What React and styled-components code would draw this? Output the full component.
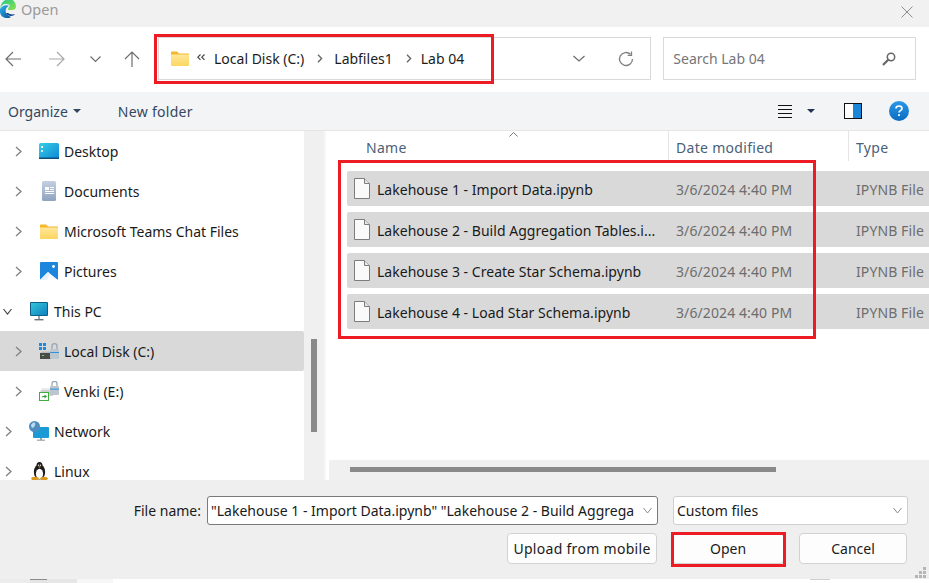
import React from 'react';
import styled, { createGlobalStyle } from 'styled-components';

const GlobalStyle = createGlobalStyle`
  html, body { margin: 0; padding: 0; background: #fff; }
  * { box-sizing: border-box; }
`

const Dialog = styled('div')`
  position: relative;
  width: 929px;
  height: 583px;
  overflow: hidden;
  display: flex;
  flex-direction: column;
  background: #fff;
  font-family: "Noto Sans", "Open Sans", sans-serif;
  font-size: 14px;
  color: #1a1a1a;
`

const TitleBar = styled('div')`
  height: 27px;
  flex: none;
  background: #f1f1f1;
  display: flex;
  align-items: flex-start;
`
const TitleText = styled('div')`
  margin-left: 5px;
  color: #9a9a9a;
  font-size: 14.5px;
  line-height: 18px;
`
const CloseButton = styled('div')`
  margin-left: auto;
  margin-right: 16px;
  margin-top: 3px;
  height: 12px;
`

const NavBar = styled('div')`
  height: 65px;
  flex: none;
  display: flex;
  align-items: center;
  padding: 0 13px 2px 5px;
`
const NavIcon = styled('div')`
  margin-left: ${props => props.$gap}px;
  display: flex;
  height: 16px;
`
const AddressBox = styled('div')`
  margin-left: 18px;
  width: 494px;
  height: 43px;
  border: 1px solid #d9d9d9;
  display: flex;
  align-items: center;
  padding-left: 12px;
`
const Crumb = styled('span')`
  margin-left: ${props => props.$gap}px;
  color: #1c1c1c;
  white-space: nowrap;
  display: flex;
`
const CrumbMark = styled('span')`
  margin-left: ${props => props.$gap}px;
  margin-bottom: ${props => props.$lift || 0}px;
  display: flex;
`
const AddressTools = styled('div')`
  margin-left: auto;
  display: flex;
  align-items: center;
  gap: 33px;
  padding-right: 16px;
`
const SearchBox = styled('div')`
  margin-left: 12px;
  width: 253px;
  height: 43px;
  border: 1px solid #d9d9d9;
  display: flex;
  align-items: center;
  justify-content: space-between;
  padding: 0 19px 0 9px;
  color: #767676;
`

const Toolbar = styled('div')`
  height: 39px;
  flex: none;
  background: #f3f4f6;
  border-bottom: 1px solid #e5e5e5;
  display: flex;
  align-items: center;
  padding-left: 8px;
`
const ToolButton = styled('div')`
  display: flex;
  align-items: center;
  gap: 5px;
  margin-left: ${props => props.$gap || 0}px;
  letter-spacing: ${props => props.$spacing || 0}px;
  color: #33475f;
`
const ToolIcons = styled('div')`
  margin-left: auto;
  display: flex;
  align-items: center;
  padding-right: 20px;
`
const ToolIcon = styled('div')`
  margin-left: ${props => props.$gap}px;
  display: flex;
`

const Main = styled('div')`
  height: 349px;
  flex: none;
  display: flex;
`
const Sidebar = styled('div')`
  width: 304px;
  flex: none;
  overflow: hidden;
  display: flex;
  flex-direction: column;
`
const TreeRow = styled('div')`
  height: 40px;
  flex: none;
  display: flex;
  align-items: center;
  padding-left: ${props => props.$level ? 15 : props.$open ? 3 : 5}px;
  background: ${props => props.$selected ? '#d9d9d9' : 'transparent'};
  border-radius: 0 2px 2px 0;
`
const TreeIcon = styled('div')`
  width: 20px;
  height: 20px;
  margin-left: 17px;
  margin-right: 5px;
  display: flex;
  align-items: center;
  justify-content: center;
`
const TreeLabel = styled('span')`
  white-space: nowrap;
  color: #1a1a1a;
`
const Splitter = styled('div')`
  width: 22px;
  flex: none;
  background: #f0f0f0;
  border-right: 2px solid #f7f7f7;
  padding: 208px 0 0 7px;
`
const SplitterThumb = styled('div')`
  width: 6px;
  height: 93px;
  background: #8a8a8a;
`

const Content = styled('div')`
  flex: 1;
  min-width: 0;
  display: flex;
  flex-direction: column;
`
const HeaderRow = styled('div')`
  height: 30px;
  flex: none;
  display: grid;
  grid-template-columns: 343px 180px 1fr;
  position: relative;
`
const HeaderCell = styled('div')`
  padding-left: ${props => props.$pad}px;
  padding-top: 7px;
  color: #4a5f78;
  letter-spacing: .3px;
  border-right: ${props => props.$last ? 'none' : '1px solid #e5e5e5'};
`
const SortCaret = styled('div')`
  position: absolute;
  left: 183px;
  top: 1px;
  display: flex;
`
const FileList = styled('div')`
  flex: 1;
  display: flex;
  flex-direction: column;
  gap: 6px;
  padding: 10px 0 0 21px;
`
const FileRow = styled('div')`
  height: 35px;
  flex: none;
  background: #d9d9d9;
  border-radius: 2px 0 0 2px;
  display: grid;
  grid-template-columns: 329px 180px 1fr;
  align-items: center;
`
const FileCell = styled('div')`
  display: flex;
  align-items: center;
  gap: 7px;
  padding-left: 7px;
  white-space: nowrap;
`
const FileName = styled('span')`
  padding-top: 2px;
  letter-spacing: .03px;
  color: #1a1a1a;
`
const FileMeta = styled('div')`
  padding-top: 2px;
  letter-spacing: .1px;
  color: #6d6d6d;
  white-space: nowrap;
`
const ScrollTrack = styled('div')`
  height: 20px;
  flex: none;
  margin-left: 3px;
  background: #f0f0f0;
  padding: 7px 0 0 21px;
`
const ScrollThumb = styled('div')`
  width: 426px;
  height: 5px;
  background: #8a8a8a;
`

const Footer = styled('div')`
  position: relative;
  height: 99px;
  flex: none;
  background: #efefef;
  display: flex;
  flex-direction: column;
  align-items: flex-end;
  padding: 16px 21px 0 0;
`
const FieldRow = styled('div')`
  display: flex;
  align-items: center;
`
const FieldLabel = styled('span')`
  margin-right: 6px;
  color: #1a1a1a;
`
const NameInput = styled('div')`
  width: 451px;
  height: 29px;
  background: #fff;
  border: 1px solid #7a7a7a;
  border-radius: 3px;
  display: flex;
  align-items: center;
  padding: 0 5px 0 3px;
`
const NameText = styled('div')`
  flex: 1;
  min-width: 0;
  overflow: hidden;
  white-space: nowrap;
  color: #1a1a1a;
`
const TypeSelect = styled('div')`
  width: 235px;
  height: 29px;
  margin-left: 15px;
  background: #fff;
  border: 1px solid #cfcfcf;
  border-radius: 3px;
  display: flex;
  align-items: center;
  justify-content: space-between;
  padding: 0 5px 0 3px;
`
const ButtonRow = styled('div')`
  display: flex;
  gap: 15px;
  margin-top: 8px;
  padding-right: 1px;
`
const DialogButton = styled('div')`
  width: ${props => props.$w}px;
  height: 31px;
  background: #fdfdfd;
  border: 1px solid #d2d2d2;
  border-radius: 4px;
  display: flex;
  align-items: center;
  justify-content: center;
  white-space: nowrap;
  letter-spacing: ${props => props.$spacing || 0}px;
  color: #1a1a1a;
`
const Grip = styled('div')`
  position: absolute;
  right: 3px;
  bottom: 1px;
  display: flex;
`

const BottomStrip = styled('div')`
  height: 4px;
  flex: none;
  display: flex;
  background: #fff;
`
const StripPart = styled('div')`
  width: ${props => props.$w}px;
  background: ${props => props.$color};
  border-top: ${props => props.$line ? `1px solid ${props.$line}` : 'none'};
`

const RedBox = styled('div')`
  position: absolute;
  left: ${props => props.$x}px;
  top: ${props => props.$y}px;
  width: ${props => props.$w}px;
  height: ${props => props.$h}px;
  border: 3px solid #ed1c24;
  pointer-events: none;
`

const Stroke = ({ w, h, color = '#6b6b6b', sw = 1.2, children }) => (
  <svg width={w} height={h} viewBox={`0 0 ${w} ${h}`} fill="none" stroke={color} strokeWidth={sw}>
    {children}
  </svg>
)

const EdgeLogo = () => (
  <svg width="16" height="18" viewBox="0 0 16 18">
    <defs>
      <linearGradient id="edgeA" x1="0" y1="0" x2="1" y2="1">
        <stop offset="0" stopColor="#2fb6ee" />
        <stop offset="1" stopColor="#0b4f9c" />
      </linearGradient>
      <linearGradient id="edgeB" x1="0" y1="0" x2="1" y2="1">
        <stop offset="0" stopColor="#1fc98c" />
        <stop offset="1" stopColor="#8ee04a" />
      </linearGradient>
    </defs>
    <path d="M0 9C1 2 5-1 9-1c4 0 7 3 7 8 0 2-2 3-4 3H8c0-2 1-3 2-4-1-2-3-2-5-2C3 4 1 6 0 9z" fill="url(#edgeB)" />
    <path d="M0 9c2-3 6-5 9-3-3 1-4 4-3 7 1 2 3 3 5 4-1 1-3 1-4 1-4 0-8-3-7-9z" fill="url(#edgeA)" />
    <path d="M6 13c1 2 3 3 5 3 2 0 3-1 4-2-3 1-6 0-7-1z" fill="#0b3f8c" />
  </svg>
)

const FolderIcon = ({ w = 18, h = 15 }) => (
  <svg width={w} height={h} viewBox="0 0 18 15">
    <defs>
      <linearGradient id="folderFill" x1="0" y1="0" x2="0" y2="1">
        <stop offset="0" stopColor="#ffe79a" />
        <stop offset="1" stopColor="#fcd65f" />
      </linearGradient>
    </defs>
    <path d="M0 1.5C0 .8.5.5 1 .5h5l2 2h9c.6 0 1 .4 1 1V4H0z" fill="#f5b72c" />
    <rect x="0" y="3.5" width="18" height="11.5" rx=".6" fill="url(#folderFill)" />
  </svg>
)

const DesktopIcon = () => (
  <svg width="20" height="16" viewBox="0 0 20 16">
    <defs>
      <linearGradient id="deskFill" x1="0" y1="0" x2="1" y2="1">
        <stop offset="0" stopColor="#35d0e6" />
        <stop offset="1" stopColor="#0f86d6" />
      </linearGradient>
    </defs>
    <rect width="20" height="16" rx="1.5" fill="url(#deskFill)" />
    <rect y="14.5" width="20" height="1.5" fill="#0d4f7d" />
    <rect x="2" y="3" width="2" height="2" fill="#fff" />
    <rect x="2" y="7" width="2" height="2" fill="#cfefff" />
  </svg>
)

const DocumentsIcon = () => (
  <svg width="14" height="20" viewBox="0 0 14 20">
    <defs>
      <linearGradient id="docFill" x1="0" y1="0" x2="0" y2="1">
        <stop offset="0" stopColor="#c4d0e2" />
        <stop offset="1" stopColor="#8fa3bf" />
      </linearGradient>
    </defs>
    <rect width="14" height="20" rx="1.5" fill="url(#docFill)" />
    <rect x="3" y="6" width="4" height="3" fill="#fff" />
    <rect x="8" y="6" width="4" height="1" fill="#fff" />
    <rect x="8" y="8" width="4" height="1" fill="#fff" />
    <rect x="3" y="10" width="9" height="1" fill="#fff" />
    <rect x="3" y="12" width="9" height="1" fill="#fff" />
  </svg>
)

const PicturesIcon = () => (
  <svg width="18" height="18" viewBox="0 0 18 18">
    <rect width="18" height="18" rx="1" fill="#1c86dc" />
    <circle cx="13.5" cy="4.5" r="1.4" fill="#fff" />
    <path d="M0 18l8-8 3 2.5L18 18z" fill="#fff" />
    <path d="M0 18l8-8 2 2-3 6z" fill="#e6f2fb" />
  </svg>
)

const MonitorIcon = () => (
  <svg width="18" height="19" viewBox="0 0 18 19">
    <defs>
      <linearGradient id="pcFill" x1="0" y1="0" x2="1" y2="1">
        <stop offset="0" stopColor="#35c6d8" />
        <stop offset="1" stopColor="#0f7fc0" />
      </linearGradient>
    </defs>
    <rect width="18" height="14" rx="1" fill="#0e5f86" />
    <rect x="1" y="1" width="16" height="12" fill="url(#pcFill)" />
    <rect x="8" y="14" width="2" height="3" fill="#9aa3aa" />
    <rect x="4.5" y="17" width="9" height="1.4" fill="#6c747b" />
  </svg>
)

const DiskIcon = () => (
  <svg width="20" height="17" viewBox="0 0 20 17">
    <rect x="0" y="0" width="3" height="3" fill="#1f8be0" />
    <rect x="4" y="0" width="3" height="3" fill="#1f8be0" />
    <rect x="0" y="4" width="3" height="3" fill="#1f8be0" />
    <rect x="4" y="4" width="3" height="3" fill="#1f8be0" />
    <path d="M1 10h13v6H1z" fill="#4a4a4a" />
    <path d="M3 8.5h10l1 1.5H1z" fill="#b9b9b9" />
    <rect x="3" y="12" width="2" height="1" fill="#5fe05f" />
    <path d="M13 6V3.2a2.5 2.5 0 0 1 5 0V6" fill="none" stroke="#9ba6b0" strokeWidth="1.3" />
    <rect x="11" y="6" width="9" height="10" rx="1" fill="#bcc6cf" />
    <rect x="11" y="9" width="9" height="1" fill="#2f92dc" />
  </svg>
)

const NetDriveIcon = () => (
  <svg width="20" height="20" viewBox="0 0 20 20">
    <path d="M2 9h12v6H0z" fill="#d0d0d0" />
    <path d="M3 7h10l1 2H2z" fill="#eaeaea" />
    <path d="M13 5V2.8a2.5 2.5 0 0 1 5 0V5" fill="none" stroke="#9ba6b0" strokeWidth="1.3" />
    <rect x="11" y="5" width="9" height="9" rx="1" fill="#bcc6cf" />
    <rect x="11" y="7.6" width="9" height="1" fill="#2f92dc" />
    <rect x=".5" y="11.5" width="9" height="8" fill="#fff" stroke="#3fae3f" />
    <path d="M2.5 17l1-2h2v-1.5l2.5 2-2.5 2V16H4z" fill="#2e9e3a" />
  </svg>
)

const NetworkIcon = () => (
  <svg width="20" height="20" viewBox="0 0 20 20">
    <rect x="4" y="6" width="16" height="11" rx="1" fill="#1c9ad6" />
    <rect x="11" y="17" width="2" height="2" fill="#9aa3aa" />
    <rect x="8" y="18.6" width="8" height="1.2" fill="#9aa3aa" />
    <circle cx="5.5" cy="5.5" r="5.5" fill="#4f8dc0" />
    <path d="M2 4c1-2 3-3 4-2 1 2-1 4-2 5-1 0-2-1-2-3z" fill="#b9dbf0" />
  </svg>
)

const TuxIcon = () => (
  <svg width="17" height="20" viewBox="0 0 18 20">
    <ellipse cx="9" cy="11" rx="6" ry="8" fill="#1d1d1d" />
    <ellipse cx="9" cy="4.5" rx="3.2" ry="4" fill="#1d1d1d" />
    <ellipse cx="9" cy="13" rx="3.8" ry="5.5" fill="#fff" />
    <circle cx="8" cy="3.8" r=".7" fill="#fff" />
    <circle cx="10" cy="3.8" r=".7" fill="#fff" />
    <path d="M7.5 5.2h3L9 6.6z" fill="#e8a317" />
    <ellipse cx="4.2" cy="18" rx="4" ry="2" fill="#d99a1c" />
    <ellipse cx="13.8" cy="18" rx="4" ry="2" fill="#d99a1c" />
  </svg>
)

const FileIcon = () => (
  <svg width="16" height="21" viewBox="0 0 16 21" style={{ flex: 'none' }}>
    <path d="M.5.5h10l5 5v15H.5z" fill="#fafafa" stroke="#7d7d7d" />
    <path d="M10.5.5v5h5" fill="#e6e6e6" stroke="#7d7d7d" />
  </svg>
)

const ChevronRight = ({ color = '#808080' }) => (
  <Stroke w={7} h={11} color={color} sw={1.3}><path d="M1 1l5 4.5L1 10" /></Stroke>
)
const CrumbChevron = () => (
  <Stroke w={6} h={9} color="#6a6a6a" sw={1.4}><path d="M1 .8l3.6 3.7L1 8.2" /></Stroke>
)
const ChevronDown = ({ w = 11, color = '#6b6b6b', sw = 1.2 }) => (
  <Stroke w={w} h={7} color={color} sw={sw}><path d={`M.5 1l${w / 2 - .5} 5 ${w / 2 - .5}-5`} /></Stroke>
)

const treeItems = [
  { label: 'Desktop', icon: <DesktopIcon />, level: 1 },
  { label: 'Documents', icon: <DocumentsIcon />, level: 1 },
  { label: 'Microsoft Teams Chat Files', icon: <FolderIcon />, level: 1 },
  { label: 'Pictures', icon: <PicturesIcon />, level: 1 },
  { label: 'This PC', icon: <MonitorIcon />, level: 0, open: true },
  { label: 'Local Disk (C:)', icon: <DiskIcon />, level: 1, selected: true },
  { label: 'Venki (E:)', icon: <NetDriveIcon />, level: 1 },
  { label: 'Network', icon: <NetworkIcon />, level: 0 },
  { label: 'Linux', icon: <TuxIcon />, level: 0 },
]

const files = [
  'Lakehouse 1 - Import Data.ipynb',
  'Lakehouse 2 - Build Aggregation Tables.i...',
  'Lakehouse 3 - Create Star Schema.ipynb',
  'Lakehouse 4 - Load Star Schema.ipynb',
]

const App = () => (
  <Dialog>
    <GlobalStyle />
    <TitleBar>
      <EdgeLogo />
      <TitleText>Open</TitleText>
      <CloseButton>
        <Stroke w={12} h={12} color="#8c8c8c" sw={1}><path d="M.5.5l11 11M11.5.5l-11 11" /></Stroke>
      </CloseButton>
    </TitleBar>

    <NavBar>
      <NavIcon $gap={0}>
        <Stroke w={16} h={16} color="#6e6e6e"><path d="M16 8H1M8 1L1 8l7 7" /></Stroke>
      </NavIcon>
      <NavIcon $gap={28}>
        <Stroke w={16} h={16} color="#a8a8a8"><path d="M0 8h15M8 1l7 7-7 7" /></Stroke>
      </NavIcon>
      <NavIcon $gap={25}>
        <Stroke w={11} h={16} color="#6e6e6e"><path d="M.5 5.5L5.5 10.5l5-5" /></Stroke>
      </NavIcon>
      <NavIcon $gap={23}>
        <Stroke w={16} h={16} color="#6e6e6e"><path d="M8 16V1M1 8l7-7 7 7" /></Stroke>
      </NavIcon>
      <AddressBox>
        <FolderIcon />
        <CrumbMark $gap={8} $lift={3}>
          <Stroke w={8} h={7} color="#444" sw={1.2}><path d="M3.5.5L.8 3.2l2.7 2.7M7.5.5L4.8 3.2l2.7 2.7" /></Stroke>
        </CrumbMark>
        <Crumb $gap={9}>Local Disk (C:)</Crumb>
        <CrumbMark $gap={13}><CrumbChevron /></CrumbMark>
        <Crumb $gap={11}>Labfiles1</Crumb>
        <CrumbMark $gap={13}><CrumbChevron /></CrumbMark>
        <Crumb $gap={9}>Lab 04</Crumb>
        <AddressTools>
          <ChevronDown w={12} />
          <Stroke w={16} h={16} color="#808080" sw={1.3}>
            <path d="M14.5 8a6.5 6.5 0 1 1-2-4.7" />
            <path d="M13.5 .5v3.8H9.7" />
          </Stroke>
        </AddressTools>
      </AddressBox>
      <SearchBox>
        <span>Search Lab 04</span>
        <Stroke w={14} h={14} color="#666" sw={1.5}>
          <circle cx="9" cy="5" r="3.7" />
          <path d="M6.2 7.8L1 13" strokeWidth="2.2" />
        </Stroke>
      </SearchBox>
    </NavBar>

    <Toolbar>
      <ToolButton>
        Organize
        <svg width="8" height="4" viewBox="0 0 8 4"><path d="M0 0h8L4 4z" fill="#33475f" /></svg>
      </ToolButton>
      <ToolButton $gap={37} $spacing={.3}>New folder</ToolButton>
      <ToolIcons>
        <ToolIcon $gap={0}>
          <Stroke w={14} h={13} color="#111" sw={1}><path d="M0 .5h14M0 4.5h14M0 8.5h14M0 12.5h14" /></Stroke>
        </ToolIcon>
        <ToolIcon $gap={15}>
          <svg width="8" height="4" viewBox="0 0 8 4"><path d="M0 0h8L4 4z" fill="#22344f" /></svg>
        </ToolIcon>
        <ToolIcon $gap={29}>
          <svg width="18" height="16" viewBox="0 0 18 16">
            <rect x=".5" y=".5" width="17" height="15" fill="#fff" stroke="#111" />
            <rect x="9" y="1" width="8" height="14" fill="#1a86d8" />
          </svg>
        </ToolIcon>
        <ToolIcon $gap={27}>
          <svg width="20" height="20" viewBox="0 0 20 20">
            <defs>
              <linearGradient id="helpFill" x1="0" y1="0" x2="0" y2="1">
                <stop offset="0" stopColor="#2b97e6" />
                <stop offset="1" stopColor="#0a6cc2" />
              </linearGradient>
            </defs>
            <circle cx="10" cy="10" r="10" fill="url(#helpFill)" />
            <path d="M7 7.6C7 5.8 8.4 5 10 5s3 .9 3 2.4c0 2.2-3 2.2-3 4.2" fill="none" stroke="#fff" strokeWidth="1.7" />
            <rect x="9.1" y="13.2" width="1.8" height="1.8" fill="#fff" />
          </svg>
        </ToolIcon>
      </ToolIcons>
    </Toolbar>

    <Main>
      <Sidebar>
        {treeItems.map(item => (
          <TreeRow key={item.label} $level={item.level} $open={item.open} $selected={item.selected}>
            {item.open ? <ChevronDown w={9} color="#444" /> : <ChevronRight />}
            <TreeIcon>{item.icon}</TreeIcon>
            <TreeLabel>{item.label}</TreeLabel>
          </TreeRow>
        ))}
      </Sidebar>
      <Splitter><SplitterThumb /></Splitter>
      <Content>
        <HeaderRow>
          <HeaderCell $pad={40}>Name</HeaderCell>
          <HeaderCell $pad={7}>Date modified</HeaderCell>
          <HeaderCell $pad={7} $last>Type</HeaderCell>
          <SortCaret>
            <Stroke w={9} h={5} color="#777" sw={1}><path d="M.5 4.5l4-4 4 4" /></Stroke>
          </SortCaret>
        </HeaderRow>
        <FileList>
          {files.map(name => (
            <FileRow key={name}>
              <FileCell><FileIcon /><FileName>{name}</FileName></FileCell>
              <FileMeta>3/6/2024 4:40 PM</FileMeta>
              <FileMeta>IPYNB File</FileMeta>
            </FileRow>
          ))}
        </FileList>
        <ScrollTrack><ScrollThumb /></ScrollTrack>
      </Content>
    </Main>

    <Footer>
      <FieldRow>
        <FieldLabel>File name:</FieldLabel>
        <NameInput>
          <NameText>"Lakehouse 1 - Import Data.ipynb" "Lakehouse 2 - Build Aggrega</NameText>
          <ChevronDown w={9} color="#8a8a8a" sw={1} />
        </NameInput>
        <TypeSelect>
          Custom files
          <ChevronDown w={9} color="#8a8a8a" sw={1} />
        </TypeSelect>
      </FieldRow>
      <ButtonRow>
        <DialogButton $w={150} $spacing={.3}>Upload from mobile</DialogButton>
        <DialogButton $w={112}>Open</DialogButton>
        <DialogButton $w={108}>Cancel</DialogButton>
      </ButtonRow>
      <Grip>
        <svg width="11" height="11" viewBox="0 0 11 11" fill="#b5b5b5">
          <rect x="8" y="0" width="3" height="3" />
          <rect x="4" y="4" width="3" height="3" />
          <rect x="8" y="4" width="3" height="3" />
          <rect x="0" y="8" width="3" height="3" />
          <rect x="4" y="8" width="3" height="3" />
          <rect x="8" y="8" width="3" height="3" />
        </svg>
      </Grip>
    </Footer>

    <BottomStrip>
      <StripPart $w={30} $color="#ececec" />
      <StripPart $w={17} $color="#e4e4e4" $line="#8a8a8a" />
      <StripPart $w={30} $color="#e6e6e6" />
      <StripPart $w={36} $color="#f6f6f6" />
      <StripPart $w={697} $color="#fff" />
      <StripPart $w={20} $color="#fff" $line="#cfcfcf" />
    </BottomStrip>

    <RedBox $x={154} $y={34} $w={340} $h={50} />
    <RedBox $x={338} $y={160} $w={478} $h={179} />
    <RedBox $x={671} $y={532} $w={115} $h={35} />
  </Dialog>
)

export default App;
